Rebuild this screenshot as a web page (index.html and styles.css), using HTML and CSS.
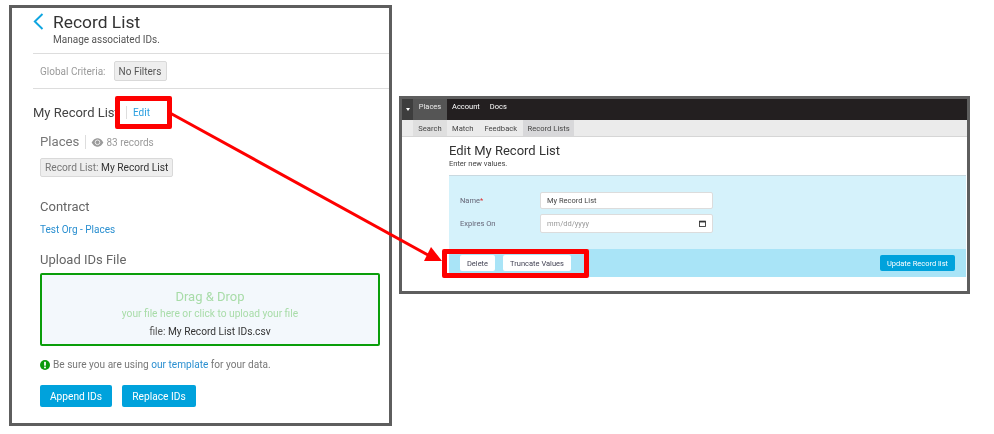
FILE: index.html
```html
<!DOCTYPE html>
<html lang="en">
<head>
<meta charset="utf-8">
<title>Record List</title>
<link rel="stylesheet" href="styles.css">
</head>
<body>
<section class="window window-left">
  <header class="page-head">
    <svg class="back" viewBox="0 0 11 17" width="11" height="17"><path d="M9.5 1 L1.8 8.5 L9.5 16" fill="none" stroke="#0ea5e0" stroke-width="1.9"/></svg>
    <div>
      <h1>Record List</h1>
      <p>Manage associated IDs.</p>
    </div>
  </header>
  <div class="criteria">
    <span class="criteria-label">Global Criteria:</span>
    <span class="chip chip-filter">No Filters</span>
  </div>
  <div class="list-head">
    <span class="list-name">My Record List</span>
    <span class="edit-link">Edit</span>
  </div>
  <div class="list-body">
    <div class="places">
      <span class="places-title">Places</span>
      <span class="records">
        <svg viewBox="0 0 14 10" width="13" height="9"><path d="M0.5 5 C3 1 5 0.3 7 0.3 S11 1 13.5 5 C11 9 9 9.7 7 9.7 S3 9 0.5 5Z" fill="#9a9a9a"/><circle cx="7" cy="4.8" r="2.6" fill="#9a9a9a" stroke="#fff" stroke-width="0.9"/></svg>
        83 records
      </span>
    </div>
    <span class="chip chip-list"><span class="chip-key">Record List:</span>&nbsp;My Record List</span>
    <h2 class="contract-title">Contract</h2>
    <a class="contract-link">Test Org - Places</a>
    <h2 class="upload-title">Upload IDs File</h2>
    <div class="dropzone">
      <div class="drop-big">Drag &amp; Drop</div>
      <div class="drop-small">your file here or click to upload your file</div>
      <div class="drop-file"><span class="drop-key">file:</span> My Record List IDs.csv</div>
    </div>
    <div class="note">
      <svg viewBox="0 0 10 10" width="10" height="10"><circle cx="5" cy="5" r="5" fill="#0a9a0a"/><rect x="4.1" y="1.8" width="1.8" height="3.9" fill="#fff"/><rect x="4.1" y="6.6" width="1.8" height="1.7" fill="#fff"/></svg>
      <span>Be sure you are using <a class="note-link">our template</a> for your data.</span>
    </div>
    <div class="actions">
      <span class="btn btn-append">Append IDs</span>
      <span class="btn btn-replace">Replace IDs</span>
    </div>
  </div>
</section>

<section class="window window-right">
  <nav class="topnav">
    <span class="caret-box"><i class="caret"></i></span>
    <span class="top-item top-active">Places</span>
    <span class="top-item">Account</span>
    <span class="top-item">Docs</span>
  </nav>
  <nav class="subnav">
    <span class="sub-item sub-search">Search</span>
    <span class="sub-item">Match</span>
    <span class="sub-item">Feedback</span>
    <span class="sub-item sub-active">Record Lists</span>
  </nav>
  <div class="edit-main">
    <h2 class="edit-title">Edit My Record List</h2>
    <p class="edit-sub">Enter new values.</p>
    <div class="form-panel">
      <div class="form-row">
        <span class="form-label">Name<b>*</b></span>
        <span class="input input-name">My Record List</span>
      </div>
      <div class="form-row">
        <span class="form-label">Expires On</span>
        <span class="input input-date">
          <span class="placeholder">mm/dd/yyyy</span>
          <svg viewBox="0 0 8 8" width="7" height="7"><rect x="0.6" y="1.4" width="6.8" height="6" fill="none" stroke="#333" stroke-width="1"/><rect x="0.6" y="1" width="6.8" height="1.8" fill="#333"/></svg>
        </span>
      </div>
    </div>
    <div class="form-footer">
      <span class="ghost ghost-delete">Delete</span>
      <span class="ghost ghost-truncate">Truncate Values</span>
      <span class="update">Update Record list</span>
    </div>
  </div>
</section>

<div class="callout callout-edit"></div>
<div class="callout callout-buttons"></div>
<svg class="arrow" width="994" height="434" viewBox="0 0 994 434">
  <line x1="170" y1="113" x2="428" y2="255" stroke="#fe0000" stroke-width="3"/>
  <polygon points="442,261 424,261 431,247" fill="#fe0000"/>
</svg>
</body>
</html>
```
FILE: styles.css
```css
* { box-sizing: border-box; }
html, body { margin: 0; padding: 0; }
body {
  position: relative;
  width: 994px;
  height: 434px;
  overflow: hidden;
  background: #fff;
  font-family: Roboto, "Liberation Sans", sans-serif;
  color: #333;
}
h1, h2, p { margin: 0; font-weight: 400; }

.window {
  position: absolute;
  background: #fff;
  border: 3px solid #5e5e5e;
  overflow: hidden;
}
.window-left { left: 9px; top: 5px; width: 383px; height: 421px; padding-left: 21px; }
.window-right { left: 399px; top: 96px; width: 571px; height: 198px; }
.page-head > *, .criteria > *, .list-head > *, .list-body > *, .topnav > *, .subnav > *, .edit-main > * { filter: blur(0.3px); }

/* left window */
.page-head {
  display: flex;
  gap: 9px;
  height: 46px;
  padding-top: 5px;
  border-bottom: 1px solid #ddd;
}
.back { flex: none; }
.page-head h1 { font-size: 17.4px; line-height: 18px; color: #333; }
.page-head p { font-size: 10px; line-height: 13px; margin-top: 2px; color: #555; }
.criteria {
  display: flex;
  align-items: center;
  gap: 8px;
  height: 35px;
  padding-left: 7px;
  border-bottom: 1px solid #ddd;
}
.criteria-label { font-size: 10px; color: #9a9a9a; }
.chip {
  display: inline-flex;
  align-items: center;
  background: #eee;
  border: 1px solid #d9d9d9;
  border-radius: 2px;
  font-size: 10px;
}
.chip-filter { width: 53px; height: 20px; justify-content: center; color: #555; }
.list-head { display: flex; align-items: center; height: 46px; }
.list-name { font-size: 13px; color: #444; width: 93px; white-space: nowrap; }
.edit-link {
  font-size: 10px;
  color: #2a9fe0;
  padding-left: 6px;
  border-left: 1px solid #ddd;
  line-height: 13px;
}
.list-body { padding-left: 7px; width: 347px; }
.places { display: flex; align-items: center; height: 14px; }
.places-title { font-size: 13.2px; color: #777; padding-right: 6px; border-right: 1px solid #ddd; line-height: 14px; }
.records { display: inline-flex; align-items: center; gap: 2px; font-size: 10px; color: #9a9a9a; margin-left: 5px; }
.chip-list { width: 133px; height: 19px; margin-top: 9px; padding-left: 4px; color: #333; white-space: nowrap; font-size: 10.2px; }
.chip-key { color: #777; }
.contract-title { font-size: 13px; line-height: 16px; color: #666; margin-top: 22px; }
.contract-link { display: block; font-size: 10px; line-height: 13px; color: #2a8fd0; margin-top: 8px; }
.upload-title { font-size: 13px; line-height: 16px; color: #666; margin-top: 16px; }
.dropzone {
  width: 340px;
  height: 73px;
  margin-top: 5px;
  padding-top: 14px;
  border: 2px solid #0a9e0a;
  border-radius: 2px;
  background: #f3f8fc;
  text-align: center;
}
.drop-big { font-size: 13px; line-height: 16px; color: #a8dca8; }
.drop-small { font-size: 10.2px; line-height: 13px; margin-top: 2px; color: #a8dca8; }
.drop-file { font-size: 10.2px; line-height: 13px; margin-top: 5px; color: #333; }
.drop-key { color: #555; }
.note { display: flex; align-items: center; gap: 3px; height: 13px; margin-top: 12px; font-size: 10.1px; color: #777; }
.note-link { color: #2a8fd0; }
.actions { display: flex; gap: 10px; margin-top: 14px; }
.btn {
  display: flex;
  align-items: center;
  justify-content: center;
  height: 22px;
  border-radius: 2px;
  background: #00a2dc;
  color: #fff;
  font-size: 10.2px;
}
.btn-append { width: 72px; }
.btn-replace { width: 74px; }

/* right window */
.topnav { display: flex; align-items: stretch; height: 21px; background: #231f20; font-size: 7.5px; color: #fff; }
.caret-box { display: flex; align-items: center; justify-content: center; width: 11px; background: #3d3d3d; }
.caret { width: 0; height: 0; border-left: 2.5px solid transparent; border-right: 2.5px solid transparent; border-top: 3px solid #fff; }
.top-item { display: flex; align-items: center; padding-bottom: 6px; margin-right: 10px; }
.top-active { background: #555; margin: 0 5px 0 0; width: 34px; justify-content: center; color: #eee; }
.subnav {
  display: flex;
  align-items: stretch;
  height: 17px;
  padding-left: 11px;
  background: #ebebeb;
  border-bottom: 1px solid #d6d6d6;
  font-size: 7.6px;
  color: #444;
}
.sub-item { display: flex; align-items: center; margin-right: 11px; }
.sub-search { background: #dfdfdf; width: 34px; margin: 0 5px 0 0; justify-content: center; }
.sub-active { background: #d8d8da; width: 51px; margin: 0 0 0 -5px; justify-content: center; }
.edit-main { padding: 0 1px 0 47px; }
.edit-title { font-size: 13px; line-height: 15px; color: #333; margin-top: 6px; }
.edit-sub { font-size: 7.5px; line-height: 9px; margin-top: 1px; color: #444; }
.form-panel {
  height: 74px;
  margin-top: 7px;
  padding: 16px 0 0 11px;
  background: #d5f2fb;
  border-top: 1px solid #c9d9e0;
  display: flex;
  flex-direction: column;
  gap: 5px;
}
.form-row { display: flex; align-items: center; }
.form-label { width: 80px; font-size: 7.5px; color: #667; }
.form-label b { color: #d33; font-weight: 400; }
.input {
  display: flex;
  align-items: center;
  justify-content: space-between;
  width: 173px;
  background: #fff;
  border: 1px solid #dcdcdc;
  border-radius: 2px;
  padding: 0 6px;
  font-size: 7.5px;
  color: #444;
}
.input-name { height: 17px; }
.input-date { height: 19px; }
.placeholder { color: #999; }
.form-footer {
  display: flex;
  align-items: center;
  height: 28px;
  padding: 0 11px;
  background: #a9e4f7;
}
.ghost {
  display: flex;
  align-items: center;
  justify-content: center;
  height: 16px;
  background: #fff;
  border-radius: 2px;
  font-size: 7.5px;
  color: #445;
}
.ghost-delete { width: 35px; margin-right: 8px; }
.ghost-truncate { width: 68px; }
.update {
  display: flex;
  align-items: center;
  justify-content: center;
  width: 75px;
  height: 16px;
  margin-left: auto;
  background: #00a2dc;
  border-radius: 2px;
  color: #fff;
  font-size: 7.5px;
}

/* annotations */
.callout { position: absolute; border: 5px solid #fe0000; border-radius: 2px; }
.callout-edit { left: 115px; top: 96px; width: 57px; height: 33px; }
.callout-buttons { left: 442px; top: 249px; width: 147px; height: 29px; }
.arrow { position: absolute; left: 0; top: 0; pointer-events: none; }
```
